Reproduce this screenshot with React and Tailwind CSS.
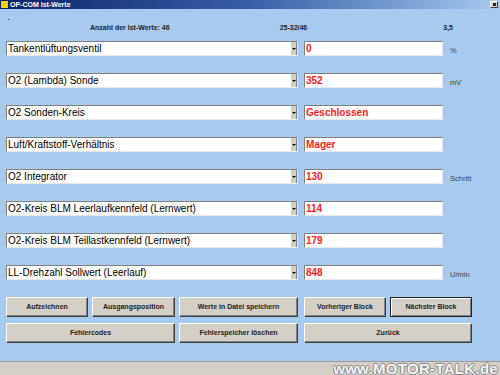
import React from "react";

const rows = [
  { label: "Tankentlüftungsventil", value: "0", unit: "%" },
  { label: "O2 (Lambda) Sonde", value: "352", unit: "mV" },
  { label: "O2 Sonden-Kreis", value: "Geschlossen", unit: "" },
  { label: "Luft/Kraftstoff-Verhältnis", value: "Mager", unit: "" },
  { label: "O2 Integrator", value: "130", unit: "Schritt" },
  { label: "O2-Kreis BLM Leerlaufkennfeld (Lernwert)", value: "114", unit: "" },
  { label: "O2-Kreis BLM Teillastkennfeld (Lernwert)", value: "179", unit: "" },
  { label: "LL-Drehzahl Sollwert (Leerlauf)", value: "848", unit: "U/min" },
];

// classic win32 raised button
const Btn = ({ children, className = "", focused = false }) => (
  <div
    className={
      "h-[20px] bg-[#d4d0c8] flex items-center justify-center text-[7px] font-bold text-[#222] " +
      (focused
        ? "border border-[#222] shadow-[inset_1px_1px_0_#fff,inset_-1px_-1px_0_#808080] "
        : "border-t border-l border-t-[#fff] border-l-[#fff] border-r border-b border-r-[#404040] border-b-[#404040] shadow-[inset_-1px_-1px_0_#808080] ") +
      className
    }
  >
    {children}
  </div>
);

export default function App() {
  return (
    <div
      className="w-[500px] h-[375px] bg-[#a6caf0] flex flex-col overflow-hidden"
      style={{ fontFamily: '"Liberation Sans", Arial, sans-serif' }}
    >
      {/* title bar */}
      <div className="h-[9px] flex items-center bg-gradient-to-r from-[#0a246a] via-[#3a5ea6] to-[#a6caf0]">
        <div className="w-[7px] h-[7px] ml-[1px] bg-[#f2d400]" />
        <span className="ml-[2px] text-[7px] leading-[8px] font-bold text-white">OP-COM Ist-Werte</span>
        <div className="ml-auto mr-[2px] w-[8px] h-[7px] bg-[#d4d0c8] border border-[#fff] border-r-[#404040] border-b-[#404040] flex items-center justify-center">
          <div className="w-[3px] h-[3px] bg-[#222]" />
        </div>
      </div>

      {/* header */}
      <div className="h-[32px] relative flex text-[7px] font-bold text-[#222]">
        <div className="absolute left-[8px] top-[10px] w-[1px] h-[1px] bg-[#333]" />
        <span className="ml-[90px] mt-[14px]">Anzahl der Ist-Werte: 46</span>
        <span className="ml-[110px] mt-[14px]">25-32/46</span>
        <span className="ml-[136px] mt-[14px]">3,5</span>
      </div>

      {/* value rows */}
      <div className="flex flex-col gap-[17px] pl-[6px]">
        {rows.map((r, i) => (
          <div key={i} className="flex h-[15px]">
            <div className="w-[292px] h-full bg-white flex border-t border-l border-t-[#808080] border-l-[#808080] border-b border-r border-b-[#e8e8e8] border-r-[#e8e8e8]">
              <span className="flex-1 pl-[1px] text-[10px] leading-[13px] text-black whitespace-nowrap">{r.label}</span>
              <div className="w-[7px] h-full bg-[#d4d0c8] border-l border-[#fff] border-r border-r-[#808080] flex items-center justify-center">
                <div className="w-0 h-0 border-l-[2px] border-r-[2px] border-t-[2px] border-l-transparent border-r-transparent border-t-black" />
              </div>
            </div>
            <div className="ml-[6px] w-[139px] h-full bg-white flex border-t border-l border-t-[#808080] border-l-[#808080] border-b border-r border-b-[#e8e8e8] border-r-[#e8e8e8]">
              <span className="pl-[1px] text-[10px] leading-[13px] font-bold text-[#ff1a1a]">{r.value}</span>
            </div>
            <span className="ml-[7px] self-end text-[7.5px] leading-[9px] text-[#444] mb-[1px]">{r.unit}</span>
          </div>
        ))}
      </div>

      {/* buttons */}
      <div className="mt-[17px] pl-[6px] flex flex-col gap-[6px]">
        <div className="flex gap-[4px]">
          <Btn className="w-[82px]">Aufzeichnen</Btn>
          <Btn className="w-[83px]">Ausgangsposition</Btn>
          <Btn className="w-[119px]">Werte in Datei speichern</Btn>
          <Btn className="w-[82px] ml-[2px]">Vorheriger Block</Btn>
          <Btn className="w-[82px]" focused>Nächster Block</Btn>
        </div>
        <div className="flex gap-[4px]">
          <Btn className="w-[169px]">Fehlercodes</Btn>
          <Btn className="w-[119px]">Fehlerspeicher löschen</Btn>
          <Btn className="w-[168px] ml-[2px]">Zurück</Btn>
        </div>
      </div>

      {/* status bar */}
      <div className="mt-auto h-[14px] bg-[#d4d0c8] border-t border-[#9a9a9a] flex items-center justify-end pr-[2px]">
        <span className="text-[15px] leading-[14px] font-bold text-[#f4f4f4] tracking-[0.3px] [text-shadow:1px_0_0_#8a8a8a,-1px_0_0_#8a8a8a,0_1px_0_#8a8a8a,0_-1px_0_#8a8a8a]">
          www.MOTOR-TALK.de
        </span>
      </div>
    </div>
  );
}
